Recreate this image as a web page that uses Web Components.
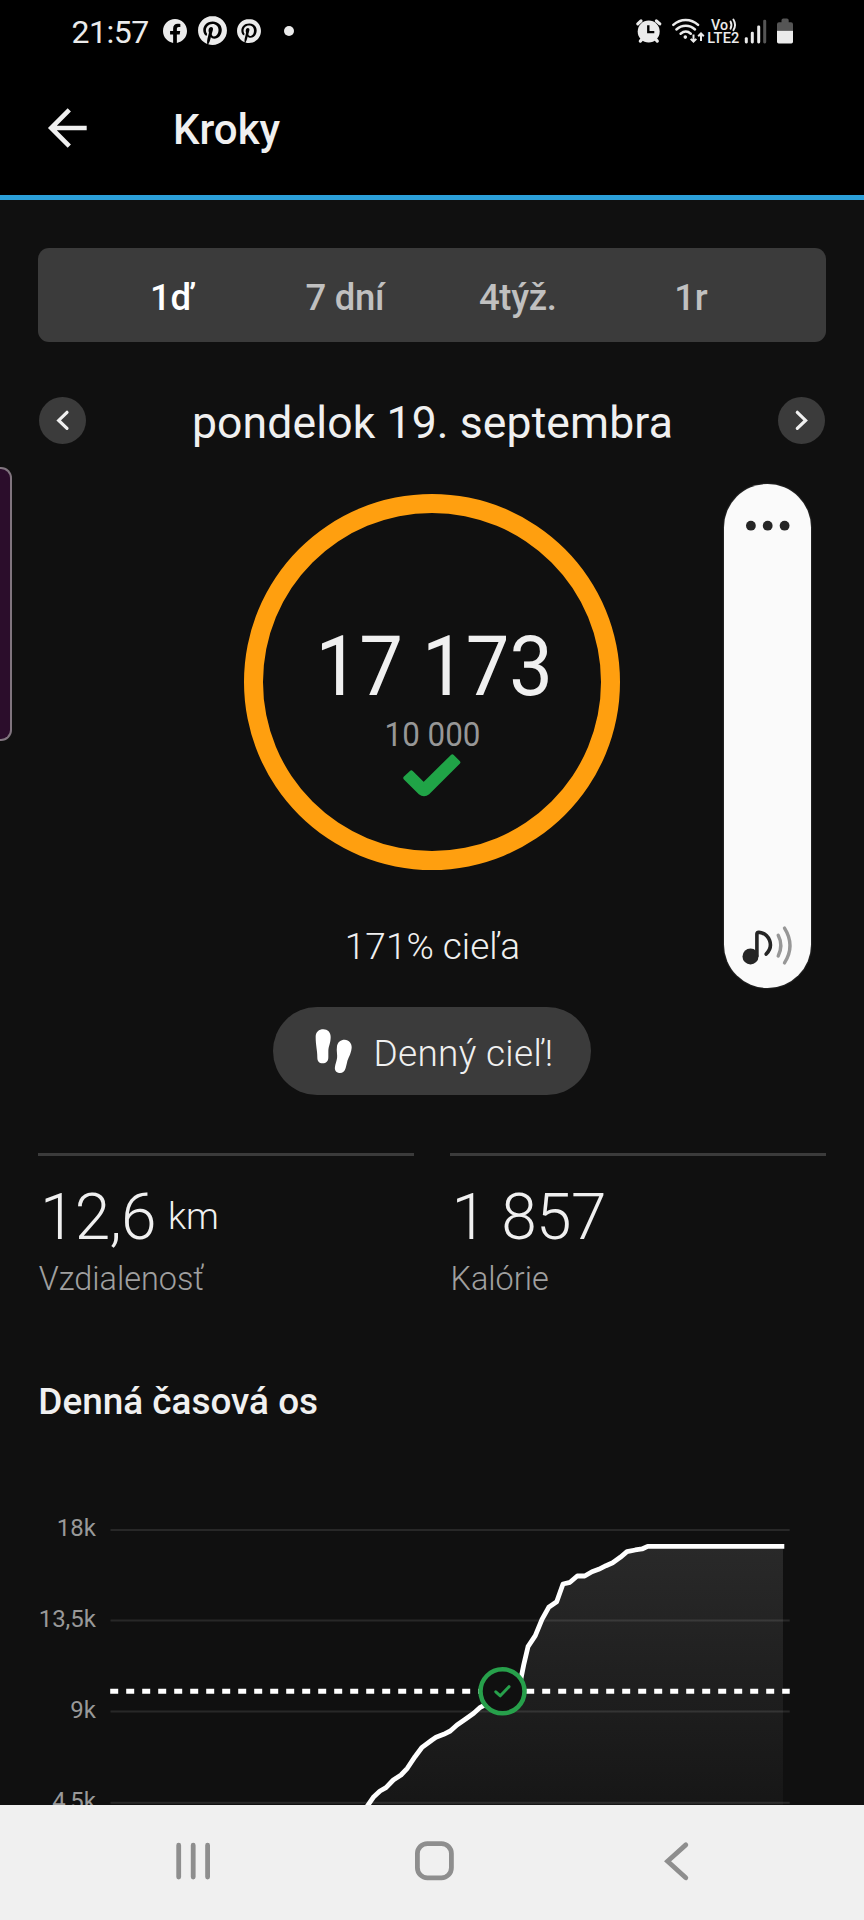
<!DOCTYPE html>
<html lang="sk">
<head>
<meta charset="utf-8">
<title>Kroky</title>
<style>
html,body{margin:0;background:#101010}
body{font-family:Roboto,"Noto Sans",sans-serif;color:#f0f0f0}
</style>
</head>
<body>
<steps-screen></steps-screen>
<script>
const define = (name, markup) => customElements.define(name, class extends HTMLElement {
  constructor() {
    super();
    const t = document.createElement('template');
    t.innerHTML = markup;
    this.attachShadow({ mode: 'open' }).append(t.content.cloneNode(true));
  }
});

const PIN = 'M12.017 0C5.396 0 .029 5.367.029 11.987c0 5.079 3.158 9.417 7.618 11.162-.105-.949-.199-2.403.041-3.439.219-.937 1.406-5.957 1.406-5.957s-.359-.72-.359-1.781c0-1.663.967-2.911 2.168-2.911 1.024 0 1.518.769 1.518 1.688 0 1.029-.653 2.567-.992 3.992-.285 1.193.6 2.165 1.775 2.165 2.128 0 3.768-2.245 3.768-5.487 0-2.861-2.063-4.869-5.008-4.869-3.41 0-5.409 2.562-5.409 5.199 0 1.033.394 2.143.889 2.741.099.12.112.225.085.345-.09.375-.293 1.199-.334 1.363-.053.225-.172.271-.401.165-1.495-.69-2.433-2.878-2.433-4.646 0-3.776 2.748-7.252 7.92-7.252 4.158 0 7.392 2.967 7.392 6.923 0 4.135-2.607 7.462-6.233 7.462-1.214 0-2.354-.629-2.758-1.379l-.749 2.848c-.269 1.045-1.004 2.352-1.498 3.146 1.123.345 2.306.535 3.55.535 6.607 0 11.985-5.365 11.985-11.987C23.97 5.39 18.592.026 11.985.026z';

define('status-bar', `
<style>
:host{display:flex;align-items:center;height:61px;background:#000;color:#ebebeb;padding:0 64px 0 71.5px;box-sizing:border-box}
time{font-size:32px;letter-spacing:-.5px;line-height:40px;padding-top:2px}
svg{display:block;flex:none;fill:#ebebeb}
.sys{margin-left:auto}
text{font:500 14.5px Roboto,sans-serif}
</style>
<time>21:57</time>
<svg style="margin-left:14.4px" width="24" height="24" viewBox="0 0 24 24"><path d="M24 12.073c0-6.627-5.373-12-12-12s-12 5.373-12 12c0 5.99 4.388 10.954 10.125 11.854v-8.385H7.078v-3.47h3.047V9.43c0-3.007 1.792-4.669 4.533-4.669 1.312 0 2.686.235 2.686.235v2.953H15.83c-1.491 0-1.956.925-1.956 1.874v2.25h3.328l-.532 3.47h-2.796v8.385C19.612 23.027 24 18.062 24 12.073z"/></svg>
<svg style="margin-left:10.5px" width="29" height="29" viewBox="0 0 24 24"><path d="${PIN}"/></svg>
<svg style="margin-left:10.5px" width="24" height="24" viewBox="0 0 24 24"><path d="${PIN}"/></svg>
<svg style="margin-left:23px" width="10" height="10"><circle cx="5" cy="5" r="5"/></svg>
<svg class="sys" width="170" height="40" viewBox="630 10.5 170 40">
  <circle cx="648.7" cy="31" r="11"/>
  <g fill="none" stroke="#ebebeb" stroke-width="3.2" stroke-linecap="round">
    <path d="M637.8 23.4 641 20.4M659.8 23.4 656.4 20.4M640.3 40.6l2-2.2M657.3 40.6l-2-2.2"/>
  </g>
  <path d="M648.3 24.8v6.8h6" fill="none" stroke="#000" stroke-width="2.4"/>
  <g fill="none" stroke="#ebebeb" stroke-width="2.5" stroke-linecap="round">
    <path d="M673.3 24.4c7.3-6.6 17.5-6.6 24.8 0"/>
    <path d="M676.4 29c5.5-4.9 13.2-4.9 18.6 0"/>
    <path d="M680.6 33.2c3.2-2.6 7.2-2.6 10.2 0"/>
  </g>
  <circle cx="685.3" cy="36.6" r="1.8"/>
  <path d="M693.5 34v7M690.7 38.4l2.8 2.8 2.8-2.8M701 40.5v-7M698.2 35.8l2.8-2.8 2.8 2.8" fill="none" stroke="#ebebeb" stroke-width="2"/>
  <text x="711" y="29" textLength="17" lengthAdjust="spacingAndGlyphs">Vo</text>
  <path d="M730.5 21c1.3 2.4 1.3 4.9 0 7.2M733.4 19c2.2 3.6 2.2 7.2 0 10.8" fill="none" stroke="#ebebeb" stroke-width="1.9" stroke-linecap="round"/>
  <text x="707.3" y="42.6" textLength="32">LTE2</text>
  <rect x="744.8" y="36.7" width="3" height="6.2" rx="1.3"/>
  <rect x="750.8" y="31.3" width="3" height="11.6" rx="1.3"/>
  <rect x="757.2" y="25" width="3" height="17.9" rx="1.3"/>
  <rect x="763.2" y="19.3" width="3" height="23.6" rx="1.3" fill="#555"/>
  <path d="M777 30.3v-6.5q0-2 2-2h2.5v-2q0-1.8 1.8-1.8h3.6q1.800 0 1.800 1.800v2h2.300q2 0 2 2v6.500z" fill="#555"/>
  <path d="M777 30.3h16v11q0 1.7-1.7 1.7h-12.6q-1.700 0-1.700-1.700z"/>
</svg>`);

define('app-bar', `
<style>
:host{display:flex;align-items:center;height:139px;box-sizing:border-box;background:#000;border-bottom:5px solid #2b9fd9;padding-left:46px}
svg{display:block;flex:none}
h1{margin:0 0 0 85px;padding-top:3.4px;font-weight:500;font-size:42px;line-height:50px}
</style>
<svg width="42" height="42" viewBox="46 107 42 42" fill="none" stroke="#f0f0f0" stroke-width="4.6"><path d="M86.7 128H51M69.3 109.9 51.2 128 69.3 146.1"/></svg>
<h1><slot></slot></h1>`);

define('period-tabs', `
<style>
:host{display:grid;grid-template-columns:repeat(4,173px);justify-content:center;align-items:center;height:94.5px;background:#3b3b3b;border-radius:11px;box-sizing:border-box;padding:5px 1.4px 0 0;font-weight:500;font-size:36.5px;letter-spacing:-.3px;color:#c0c0c0}
::slotted(*){text-align:center;line-height:44px}
::slotted([active]){color:#fff}
</style><slot></slot>`);

define('date-switcher', `
<style>
:host{display:flex;justify-content:space-between;align-items:center;height:47px;padding:0 .7px}
i{width:47px;height:47px;border-radius:50%;background:#3b3b3b;display:block}
svg{display:block}
span{font-size:44.5px;letter-spacing:.12px;line-height:52px;padding:5px 0 0 1px}
</style>
<i><svg width="47" height="47" fill="none" stroke="#f0f0f0" stroke-width="3.2" stroke-linecap="round"><path d="M28 15.3 19.7 23.4 28 31.4"/></svg></i>
<span><slot></slot></span>
<i><svg width="47" height="47" fill="none" stroke="#f0f0f0" stroke-width="3.2" stroke-linecap="round"><path d="M19.3 15.3 27.6 23.4 19.3 31.4"/></svg></i>`);

define('goal-ring', `
<style>
:host{display:flex;flex-direction:column;align-items:center;width:376px;height:376px;box-sizing:border-box;border:19.5px solid #ff9f0f;border-radius:50%;padding-top:109px}
.n{font-size:84px;line-height:90px;padding-left:4px;white-space:nowrap;transform:scaleX(.924)}
.g{font-size:33px;line-height:40px;margin-top:2.5px;color:#979797;white-space:nowrap;transform:scaleX(.95)}
svg{display:block;margin-top:-2.5px}
</style>
<div class="n"><slot></slot></div>
<div class="g"><slot name="goal"></slot></div>
<svg width="60" height="46" viewBox="517 815 180 138"><path fill="#20a447" stroke="#20a447" stroke-width="12" stroke-linejoin="round" d="M527 893 545 876 582 913 668 828 686 846 595 937Q583 946 571 937Z"/></svg>`);

define('goal-badge', `
<style>
:host{display:flex;width:318px;height:88px;border-radius:44px;background:#3b3b3b;box-sizing:border-box;padding-left:39.7px}
svg{display:block;margin-top:19px;flex:none}
span{font-weight:300;font-size:37px;letter-spacing:.3px;line-height:88px;padding-top:2.4px;margin-left:18.8px;white-space:nowrap}
</style>
<svg width="42" height="50" viewBox="190 380 126 150" fill="#fff">
<path d="M198 412C198 398 208 390 221 390C234 390 243 399 243 413C243 432 236 442 236 455L236 474C236 486 229 492 219 492C208 492 203 485 203 475C203 450 198 440 198 412Z"/>
<path d="M262 440C264 428 273 421 285 421C298 422 307 432 306 445C304 466 295 474 292 490L288 506C285 517 278 522 269 521C259 519 254 512 256 502C259 485 264 480 262 463C261 455 261 447 262 440Z"/></svg>
<span><slot></slot></span>`);

define('stat-tile', `
<style>
:host{display:block;border-top:3px solid #3b3b3b;font-weight:300}
.v{display:flex;align-items:baseline;margin-top:32px;height:60px;font-size:64px;line-height:60px;letter-spacing:-.7px;padding-left:1.6px}
::slotted([slot=unit]){font-size:37px;letter-spacing:0;line-height:40px;position:relative;top:-10px;margin-left:12px}
.l{font-size:32.4px;line-height:40px;margin-top:11.5px;padding-left:.5px;color:#a0a0a0}
</style>
<div class="v"><span><slot></slot></span><slot name="unit"></slot></div>
<div class="l"><slot name="label"></slot></div>`);

define('timeline-chart', `
<style>
:host{display:block;height:380.6px}
svg{display:block}
text{font:24px Roboto,sans-serif;fill:#999;text-anchor:end}
</style>
<svg width="864" height="380.6" viewBox="0 1424 864 380.6">
  <defs><linearGradient id="a" gradientUnits="userSpaceOnUse" x1="0" y1="1546" x2="0" y2="1895"><stop offset="0" stop-color="#292929"/><stop offset="1" stop-color="#101010"/></linearGradient></defs>
  <path fill="url(#a)" d="M366 1808 373.3 1797.3 386 1787.7 401 1775 415 1756.7 421.7 1747.7 432 1740 450.3 1731 465.3 1719.3 480.3 1708.3 502 1690 520.3 1681.7 523.7 1665 528 1646.7 535.3 1635.7 542 1619.3 548.7 1607.3 556.7 1601.7 563 1584 570 1582.3 577.3 1576 584.7 1576 592 1571.7 606 1565.7 620.3 1557.3 627 1551.7 642 1549 647.7 1546.3H783V1808z"/>
  <path d="M110.5 1530H789.7M110.5 1620.4H789.7M110.5 1711.5H789.7M110.5 1802.8H789.7" stroke="#fff" stroke-opacity=".1" stroke-width="2"/>
  <path d="M110.2 1691.3H789.7" stroke="#fff" stroke-width="5" stroke-dasharray="8 8"/>
  <path fill="none" stroke="#fff" stroke-width="4.8" stroke-linejoin="round" d="M366 1808 373.3 1797.3 380 1791 386 1787.7 393.3 1780 401 1775 407.3 1768.3 415 1756.7 421.7 1747.7 432 1740 436 1737.3 443.7 1734.3 450.3 1731 457 1725 465.3 1719.3 473.7 1713.3 480.3 1707.3 502 1696 518 1690 520.3 1681.7 523.7 1665 528 1646.7 535.3 1635.7 542 1619.3 548.7 1607.3 556.7 1601.7 563 1584 570 1582.3 577.3 1576 584.7 1576 592 1571.7 598.7 1569.3 606 1565.7 612.7 1562.7 620.3 1557.3 627 1551.7 635.3 1550 642 1549 647.7 1546.3H784.3"/>
  <circle cx="502.5" cy="1691.3" r="22" fill="#101010" stroke="#27a04b" stroke-width="4.5"/>
  <path d="M495.8 1691.8 500.3 1695.8 509 1686.7" fill="none" stroke="#27a04b" stroke-width="3" stroke-linecap="round" stroke-linejoin="round"/>
  <text x="96" y="1536">18k</text><text x="96" y="1627">13,5k</text><text x="96" y="1718.3">9k</text><text x="96" y="1809.5">4,5k</text>
</svg>`);

define('volume-panel', `
<style>
:host{display:flex;flex-direction:column;justify-content:space-between;width:87.3px;height:504.2px;border-radius:44px;background:#fafafa;box-shadow:0 0 2px #555}
svg{display:block}
</style>
<svg width="87.3" height="80" viewBox="723.7 483.3 87.3 80" fill="#252525"><circle cx="750.6" cy="525" r="4.9"/><circle cx="767.4" cy="525" r="4.9"/><circle cx="784.3" cy="525" r="4.9"/></svg>
<svg width="87.3" height="80" viewBox="723.7 901.3 87.3 80" fill="none" stroke-linecap="round">
<circle cx="750.2" cy="949.7" r="8" fill="#252525"/>
<path d="M756.6 949V927.2Q756.6 925.3 758.6 925.5C769 927 774.300 938.8 765.900 947.4" stroke="#252525" stroke-width="3.6"/>
<path d="M777.9 928.6Q783.2 938.8 777.9 949.2M784.2 921.4Q795.200 938.8 784.200 956.2" stroke="#979797" stroke-width="3.4"/></svg>`);

define('edge-handle', `
<style>:host{display:block;width:12.3px;height:273.6px;box-sizing:border-box;border:2.4px solid #81757f;border-left:0;border-radius:0 11px 11px 0;background:#2b0d2b}</style>`);

define('nav-bar', `
<style>
:host{display:grid;grid-template-columns:repeat(3,242px);padding:0 0 3px 72px;height:115px;align-items:center;justify-items:center;background:#f0f0f0;box-sizing:border-box}
svg{display:block;fill:none;stroke:#8e8e8e;stroke-width:4.8;stroke-linecap:round}
</style>
<svg width="42" height="42" viewBox="0 0 42 42"><path d="M6.7 5.2V37M21.2 5.2V37M35.6 5.2V37"/></svg>
<svg width="42" height="42" viewBox="0 0 42 42"><rect x="3.4" y="3.6" width="34" height="34.2" rx="10"/></svg>
<svg width="42" height="42" viewBox="0 0 42 42"><path d="M29.8 4.9 11.6 21.2 29.8 37.8"/></svg>`);

define('steps-screen', `
<style>
:host{display:flex;flex-direction:column;width:864px;height:1920px;overflow:hidden;position:relative;background:#101010}
main{height:1605px;box-sizing:border-box;padding:48px 38.3px 0;overflow:hidden;display:flex;flex-direction:column}
date-switcher{margin-top:55px}
goal-ring{margin:49.8px auto 0}
.pct{margin-top:54.7px;padding-left:1px;font-weight:300;font-size:37px;line-height:44px;text-align:center}
goal-badge{margin:38.7px auto 0}
.stats{display:grid;grid-template-columns:1fr 1fr;gap:36px;margin-top:57.6px}
h2{margin:81px 0 0;font-weight:500;font-size:36.9px;line-height:44px}
timeline-chart{margin:0 -38.3px}
volume-panel{position:absolute;left:723.7px;top:483.7px}
edge-handle{position:absolute;left:0;top:467.2px}
</style>
<status-bar></status-bar>
<app-bar>Kroky</app-bar>
<main>
  <period-tabs><span active>1ď</span><span>7 dní</span><span>4týž.</span><span>1r</span></period-tabs>
  <date-switcher>pondelok 19. septembra</date-switcher>
  <goal-ring>17 173<span slot="goal">10 000</span></goal-ring>
  <div class="pct">171% cieľa</div>
  <goal-badge>Denný cieľ!</goal-badge>
  <div class="stats">
    <stat-tile>12,6<span slot="unit">km</span><span slot="label">Vzdialenosť</span></stat-tile>
    <stat-tile>1 857<span slot="label">Kalórie</span></stat-tile>
  </div>
  <h2>Denná časová os</h2>
  <timeline-chart></timeline-chart>
</main>
<nav-bar></nav-bar>
<volume-panel></volume-panel>
<edge-handle></edge-handle>`);
</script>
</body>
</html>
